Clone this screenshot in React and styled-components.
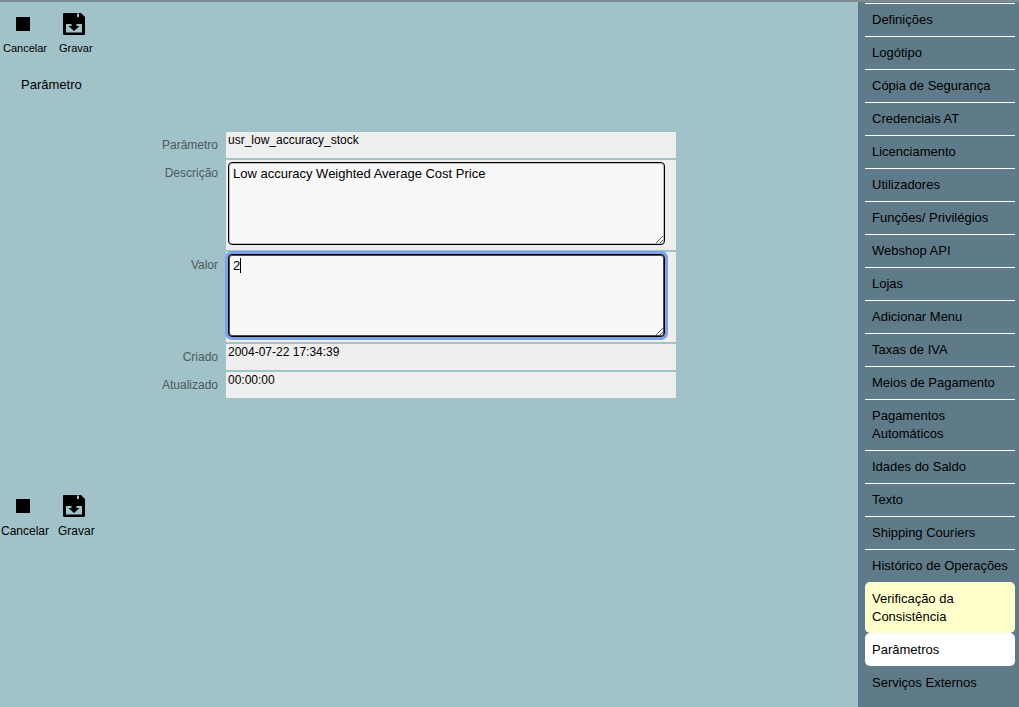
import React from 'react';
import styled, { createGlobalStyle } from 'styled-components';

const GlobalStyle = createGlobalStyle`
  html, body {
    margin: 0;
    padding: 0;
    height: 100%;
    overflow: hidden;
  }
  body {
    font-family: "Liberation Sans", Arial, sans-serif;
    background: #a0c2c8;
  }
`;

const Page = styled.div`
  display: flex;
  height: 707px;
  border-top: 2px solid #7d8b92;
  box-sizing: border-box;
`;

const Main = styled.div`
  flex: 1;
  display: flex;
  flex-direction: column;
  min-width: 0;
`;

const Toolbar = styled.div`
  display: flex;
  align-items: flex-start;
  gap: ${(p) => p.$gap}px;
  padding: ${(p) => p.$top}px 0 0 ${(p) => p.$left}px;
`;

const ToolButton = styled.div`
  display: flex;
  flex-direction: column;
  align-items: center;
  font-size: ${(p) => p.$size}px;
  line-height: 14px;
  color: #000;
`;

const IconSlot = styled.div`
  height: 26px;
  margin-bottom: ${(p) => p.$space}px;
  padding-right: 4px;
  display: flex;
  align-items: center;
  justify-content: center;
`;

const Title = styled.div`
  font-size: 13px;
  line-height: 16px;
  margin: 22px 0 0 21px;
  color: #000;
`;

const Form = styled.div`
  display: grid;
  grid-template-columns: 218px 450px;
  column-gap: 8px;
  row-gap: 2px;
  margin-top: 39px;
  width: 676px;
`;

const Label = styled.div`
  text-align: right;
  font-size: 12px;
  line-height: 14px;
  padding-top: 6px;
  color: #4d5a5e;
`;

const Value = styled.div`
  background: #eeeeee;
  height: 26px;
  box-sizing: border-box;
  padding: 1px 2px 0;
  font-size: 12px;
  line-height: 14px;
  color: #000;
`;

const FieldCell = styled.div`
  position: relative;
  background: #eeeeee;
  height: 90px;
  box-sizing: border-box;
  padding: 2px 11px 0 2px;
`;

const Area = styled.textarea`
  display: block;
  width: 437px;
  height: 83px;
  box-sizing: border-box;
  margin: 0;
  padding: 3px 4px 4px;
  background: #f8f8f8;
  border: 1px solid #000;
  border-radius: 4px;
  outline: none;
  font-family: "Liberation Sans", Arial, sans-serif;
  font-size: 13px;
  line-height: 15px;
  color: #000;
  box-shadow: ${(p) => (p.$focused ? '0 0 0 1px rgba(0, 0, 0, 0.7) inset, 0 0 0 3px #78a2ea' : '0 0 0 1px rgba(0, 0, 0, 0.25) inset')};
`;

const Caret = styled.span`
  position: absolute;
  left: 14px;
  top: 6px;
  width: 1px;
  height: 15px;
  background: #000;
`;

const Sidebar = styled.nav`
  width: 161px;
  flex: none;
  background: #5f7a88;
  box-sizing: border-box;
  padding: 1px 4px 0 7px;
`;

const MenuItem = styled.div`
  box-sizing: border-box;
  padding: ${(p) => (p.$plain ? 8 : 7)}px 7px 7px;
  font-size: 13px;
  line-height: 18px;
  color: #000;
  border-top: ${(p) => (p.$plain ? 'none' : '1px solid #fff')};
  background: ${(p) => p.$bg || 'transparent'};
  border-radius: ${(p) => (p.$bg ? '5px' : '0')};
`;

const StopIcon = () => (
  <svg width="14" height="14" viewBox="0 0 14 14">
    <rect width="14" height="14" fill="#000" />
  </svg>
);

const SaveIcon = () => (
  <svg width="22" height="22" viewBox="0 0 22 22">
    <path
      fillRule="evenodd"
      fill="#000"
      d="M1 0H18L22 4V20.5A1.5 1.5 0 0 1 20.5 22H1.5A1.5 1.5 0 0 1 0 20.5V1A1 1 0 0 1 1 0ZM14 0.5V4H16V0.5ZM3 11V19.5H19V11Z"
    />
    <path fill="#000" d="M8.5 10H13.5V13H16.5L11 18L5.5 13H8.5Z" />
  </svg>
);

const ToolActions = ({ size, gap, top, left, space }) => (
  <Toolbar $gap={gap} $top={top} $left={left}>
    <ToolButton $size={size}>
      <IconSlot $space={space}><StopIcon /></IconSlot>
      Cancelar
    </ToolButton>
    <ToolButton $size={size}>
      <IconSlot $space={space}><SaveIcon /></IconSlot>
      Gravar
    </ToolButton>
  </Toolbar>
);

const menu = [
  'Definições',
  'Logótipo',
  'Cópia de Segurança',
  'Credenciais AT',
  'Licenciamento',
  'Utilizadores',
  'Funções/ Privilégios',
  'Webshop API',
  'Lojas',
  'Adicionar Menu',
  'Taxas de IVA',
  'Meios de Pagamento',
  'Pagamentos Automáticos',
  'Idades do Saldo',
  'Texto',
  'Shipping Couriers',
  'Histórico de Operações',
];

const App = () => (
  <>
    <GlobalStyle />
    <Page>
      <Main>
        <ToolActions size={11} gap={12} top={9} left={3} space={4} />
        <Title>Parâmetro</Title>
        <Form>
          <Label>Parâmetro</Label>
          <Value>usr_low_accuracy_stock</Value>
          <Label>Descrição</Label>
          <FieldCell>
            <Area readOnly defaultValue="Low accuracy Weighted Average Cost Price" />
          </FieldCell>
          <Label>Valor</Label>
          <FieldCell>
            <Area readOnly defaultValue="2" $focused />
            <Caret />
          </FieldCell>
          <Label>Criado</Label>
          <Value>2004-07-22 17:34:39</Value>
          <Label>Atualizado</Label>
          <Value>00:00:00</Value>
        </Form>
        <ToolActions size={12} gap={9} top={95} left={1} space={5} />
      </Main>
      <Sidebar>
        {menu.map((item) => (
          <MenuItem key={item}>{item}</MenuItem>
        ))}
        <MenuItem $bg="#ffffcc" $plain>Verificação da Consistência</MenuItem>
        <MenuItem $bg="#ffffff" $plain>Parâmetros</MenuItem>
        <MenuItem $plain>Serviços Externos</MenuItem>
      </Sidebar>
    </Page>
  </>
);

export default App;
